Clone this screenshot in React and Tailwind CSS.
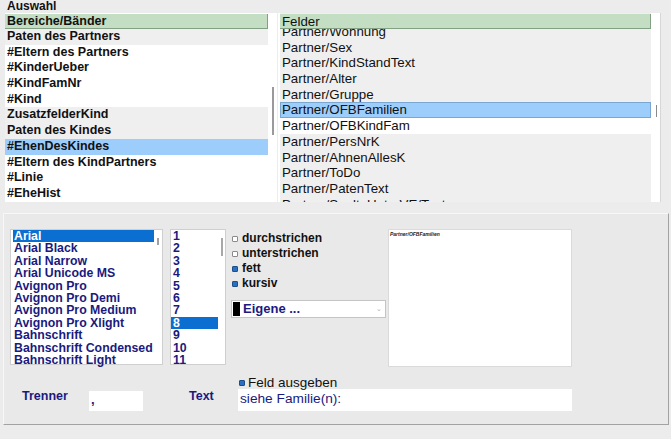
import React from "react";

const leftRows = [
  { t: "Paten des Partners", bg: "bg-[#efefef]" },
  { t: "#Eltern des Partners", bg: "bg-white" },
  { t: "#KinderUeber", bg: "bg-white" },
  { t: "#KindFamNr", bg: "bg-white" },
  { t: "#Kind", bg: "bg-white" },
  { t: "ZusatzfelderKind", bg: "bg-[#efefef]" },
  { t: "Paten des Kindes", bg: "bg-[#efefef]" },
  { t: "#EhenDesKindes", sel: true },
  { t: "#Eltern des KindPartners", bg: "bg-white" },
  { t: "#Linie", bg: "bg-white" },
  { t: "#EheHist", bg: "bg-white" },
];

const rightRows = [
  { t: "Partner/Wohnung" },
  { t: "Partner/Sex" },
  { t: "Partner/KindStandText" },
  { t: "Partner/Alter" },
  { t: "Partner/Gruppe" },
  { t: "Partner/OFBFamilien", sel: true },
  { t: "Partner/OFBKindFam", white: true },
  { t: "Partner/PersNrK" },
  { t: "Partner/AhnenAllesK" },
  { t: "Partner/ToDo" },
  { t: "Partner/PatenText" },
  { t: "Partner/SpalteUnterVE/Text" },
];

const fonts = [
  "Arial",
  "Arial Black",
  "Arial Narrow",
  "Arial Unicode MS",
  "Avignon Pro",
  "Avignon Pro Demi",
  "Avignon Pro Medium",
  "Avignon Pro Xlight",
  "Bahnschrift",
  "Bahnschrift Condensed",
  "Bahnschrift Light",
];

const sizes = ["1", "2", "3", "4", "5", "6", "7", "8", "9", "10", "11"];

const checks = [
  { t: "durchstrichen", on: false },
  { t: "unterstrichen", on: false },
  { t: "fett", on: true },
  { t: "kursiv", on: true },
];

function Box({ on }) {
  return on ? (
    <span className="w-[6px] h-[6px] bg-[#2a70c0] border border-[#1f4f8a] rounded-[1px] shrink-0" />
  ) : (
    <span className="w-[6px] h-[6px] bg-white border border-[#8a8a8a] rounded-[1px] shrink-0" />
  );
}

export default function App() {
  return (
    <div className="w-[671px] h-[439px] bg-[#ececec] overflow-hidden font-['Liberation_Sans',Arial,sans-serif] text-[#111]">
      <div className="h-[13px] pl-[7px] text-[12px] font-bold leading-[13px]">Auswahl</div>

      {/* lists */}
      <div className="flex pl-[5px] h-[189px]">
        <div className="w-[272px] h-[189px] bg-white flex">
          <div className="w-[263px] pt-[1px] overflow-hidden">
            <div className="h-[15px] bg-[#c3dec3] border-b border-r border-[#84a084] px-[2px] text-[12.5px] font-bold leading-[14px]">
              Bereiche/Bänder
            </div>
            {leftRows.map((r) => (
              <div
                key={r.t}
                className={
                  r.sel
                    ? "h-[15.7px] bg-[#9dcdfa] px-[2px] text-[12.5px] font-bold leading-[15.7px]"
                    : "h-[15.7px] px-[2px] text-[12.5px] font-bold leading-[15.7px] " + r.bg
                }
              >
                {r.t}
              </div>
            ))}
          </div>
          <div className="w-[9px] relative">
            <span className="absolute left-[4px] top-[74px] w-[1.5px] h-[48px] bg-[#9a9a9a]" />
          </div>
        </div>

        <div className="ml-[1px] w-[383px] h-[189px] bg-white flex pl-[2px] border-r border-[#d6d6d6]">
          <div className="w-[371px] pt-[1px] relative overflow-hidden bg-[#efefef]">
            <div className="absolute left-0 top-[1px] w-[371px] h-[15px] bg-[#c3dec3] border-b border-r border-[#84a084] px-[2px] text-[13.3px] leading-[15px] z-10">
              Felder
            </div>
            <div className="mt-[10px]">
              {rightRows.map((r) => (
                <div
                  key={r.t}
                  className={
                    r.sel
                      ? "h-[15.7px] bg-[#9dcdfa] border border-[#7aa6d2] px-[1px] text-[13.3px] leading-[13.7px]"
                      : r.white
                      ? "h-[15.7px] bg-white px-[2px] text-[13.3px] leading-[15.7px]"
                      : "h-[15.7px] px-[2px] text-[13.3px] leading-[15.7px]"
                  }
                >
                  {r.t}
                </div>
              ))}
            </div>
          </div>
          <div className="w-[9px] relative">
            <span className="absolute left-[5px] top-[92px] w-[1px] h-[12px] bg-[#8a8a8a]" />
          </div>
        </div>
      </div>

      {/* lower panel */}
      <div className="ml-[3px] mt-[11px] w-[666px] h-[212px] bg-[#e9e9e9] border border-t-[#f7f7f7] border-l-[#f7f7f7] border-b-[#a2a2a2] border-r-[#a2a2a2]">
        <div className="flex pt-[15px] pl-[6px]">
          <div className="w-[153px] h-[136px] bg-white border border-[#cfcfcf] flex">
            <div className="w-[143px] pl-[2px]">
              {fonts.map((f, i) => (
                <div
                  key={f}
                  className={
                    i === 0
                      ? "h-[12.4px] bg-[#0a6fd0] text-white pl-[1px] text-[12.3px] font-bold leading-[12.4px]"
                      : "h-[12.4px] text-[#1a1a80] pl-[1px] text-[12.3px] font-bold leading-[12.4px]"
                  }
                >
                  {f}
                </div>
              ))}
            </div>
            <div className="relative w-[8px]">
              <span className="absolute left-[3px] top-[8px] w-[1.5px] h-[7px] bg-[#a0a0a0]" />
            </div>
          </div>

          <div className="ml-[7px] w-[56px] h-[136px] bg-white border border-[#cfcfcf] flex">
            <div className="w-[47px]">
              {sizes.map((s) => (
                <div
                  key={s}
                  className={
                    s === "8"
                      ? "h-[12.4px] bg-[#0a6fd0] text-white pl-[2px] text-[12.3px] font-bold leading-[12.4px]"
                      : "h-[12.4px] text-[#1a1a80] pl-[2px] text-[12.3px] font-bold leading-[12.4px]"
                  }
                >
                  {s}
                </div>
              ))}
            </div>
            <div className="relative w-[7px]">
              <span className="absolute left-[3px] top-[8px] w-[2px] h-[18px] bg-[#a8a8a8]" />
            </div>
          </div>

          <div className="ml-[5px] w-[155px] pt-[2px]">
            {checks.map((c) => (
              <div key={c.t} className="h-[15px] flex items-center pl-[1px] gap-[4px]">
                <Box on={c.on} />
                <span className="text-[12px] font-bold leading-[15px] text-[#111]">{c.t}</span>
              </div>
            ))}
            <div className="mt-[9px] h-[18px] bg-white border border-[#c4c4c4] flex items-center pl-[1px]">
              <span className="w-[7px] h-[14px] bg-black" />
              <span className="ml-[3px] text-[13px] font-bold text-[#1a1a80] leading-[16px]">Eigene ...</span>
              <span className="ml-auto mr-[3px] text-[7px] text-[#b0b0b0] leading-[8px]">⌄</span>
            </div>
          </div>

          <div className="ml-[2px] w-[184px] h-[138px] bg-white border border-[#dadada] pl-[1px] pt-[1px]">
            <div className="text-[5px] font-bold italic leading-[6px] text-[#222]">Partner/OFBFamilien</div>
          </div>
        </div>

        <div className="flex items-end mt-[10px] pl-[18px]">
          <div className="w-[67px] mb-[8px] text-[12.5px] font-bold leading-[14px] text-[#1a1a80]">Trenner</div>
          <div className="w-[54px] h-[20px] bg-white pl-[2px] text-[13px] font-bold leading-[18px] text-[#1a1a80]">,</div>
          <div className="ml-[46px] w-[49px] mb-[8px] text-[12.5px] font-bold leading-[14px] text-[#1a1a80]">Text</div>
          <div className="w-[334px]">
            <div className="h-[12px] flex items-center gap-[3px] pl-[1px]">
              <Box on={true} />
              <span className="text-[13.5px] leading-[12px] text-[#111]">Feld ausgeben</span>
            </div>
            <div className="h-[22px] bg-white pl-[2px] text-[13.7px] leading-[20px] text-[#1a1a80]">siehe Familie(n):</div>
          </div>
        </div>
      </div>
    </div>
  );
}
